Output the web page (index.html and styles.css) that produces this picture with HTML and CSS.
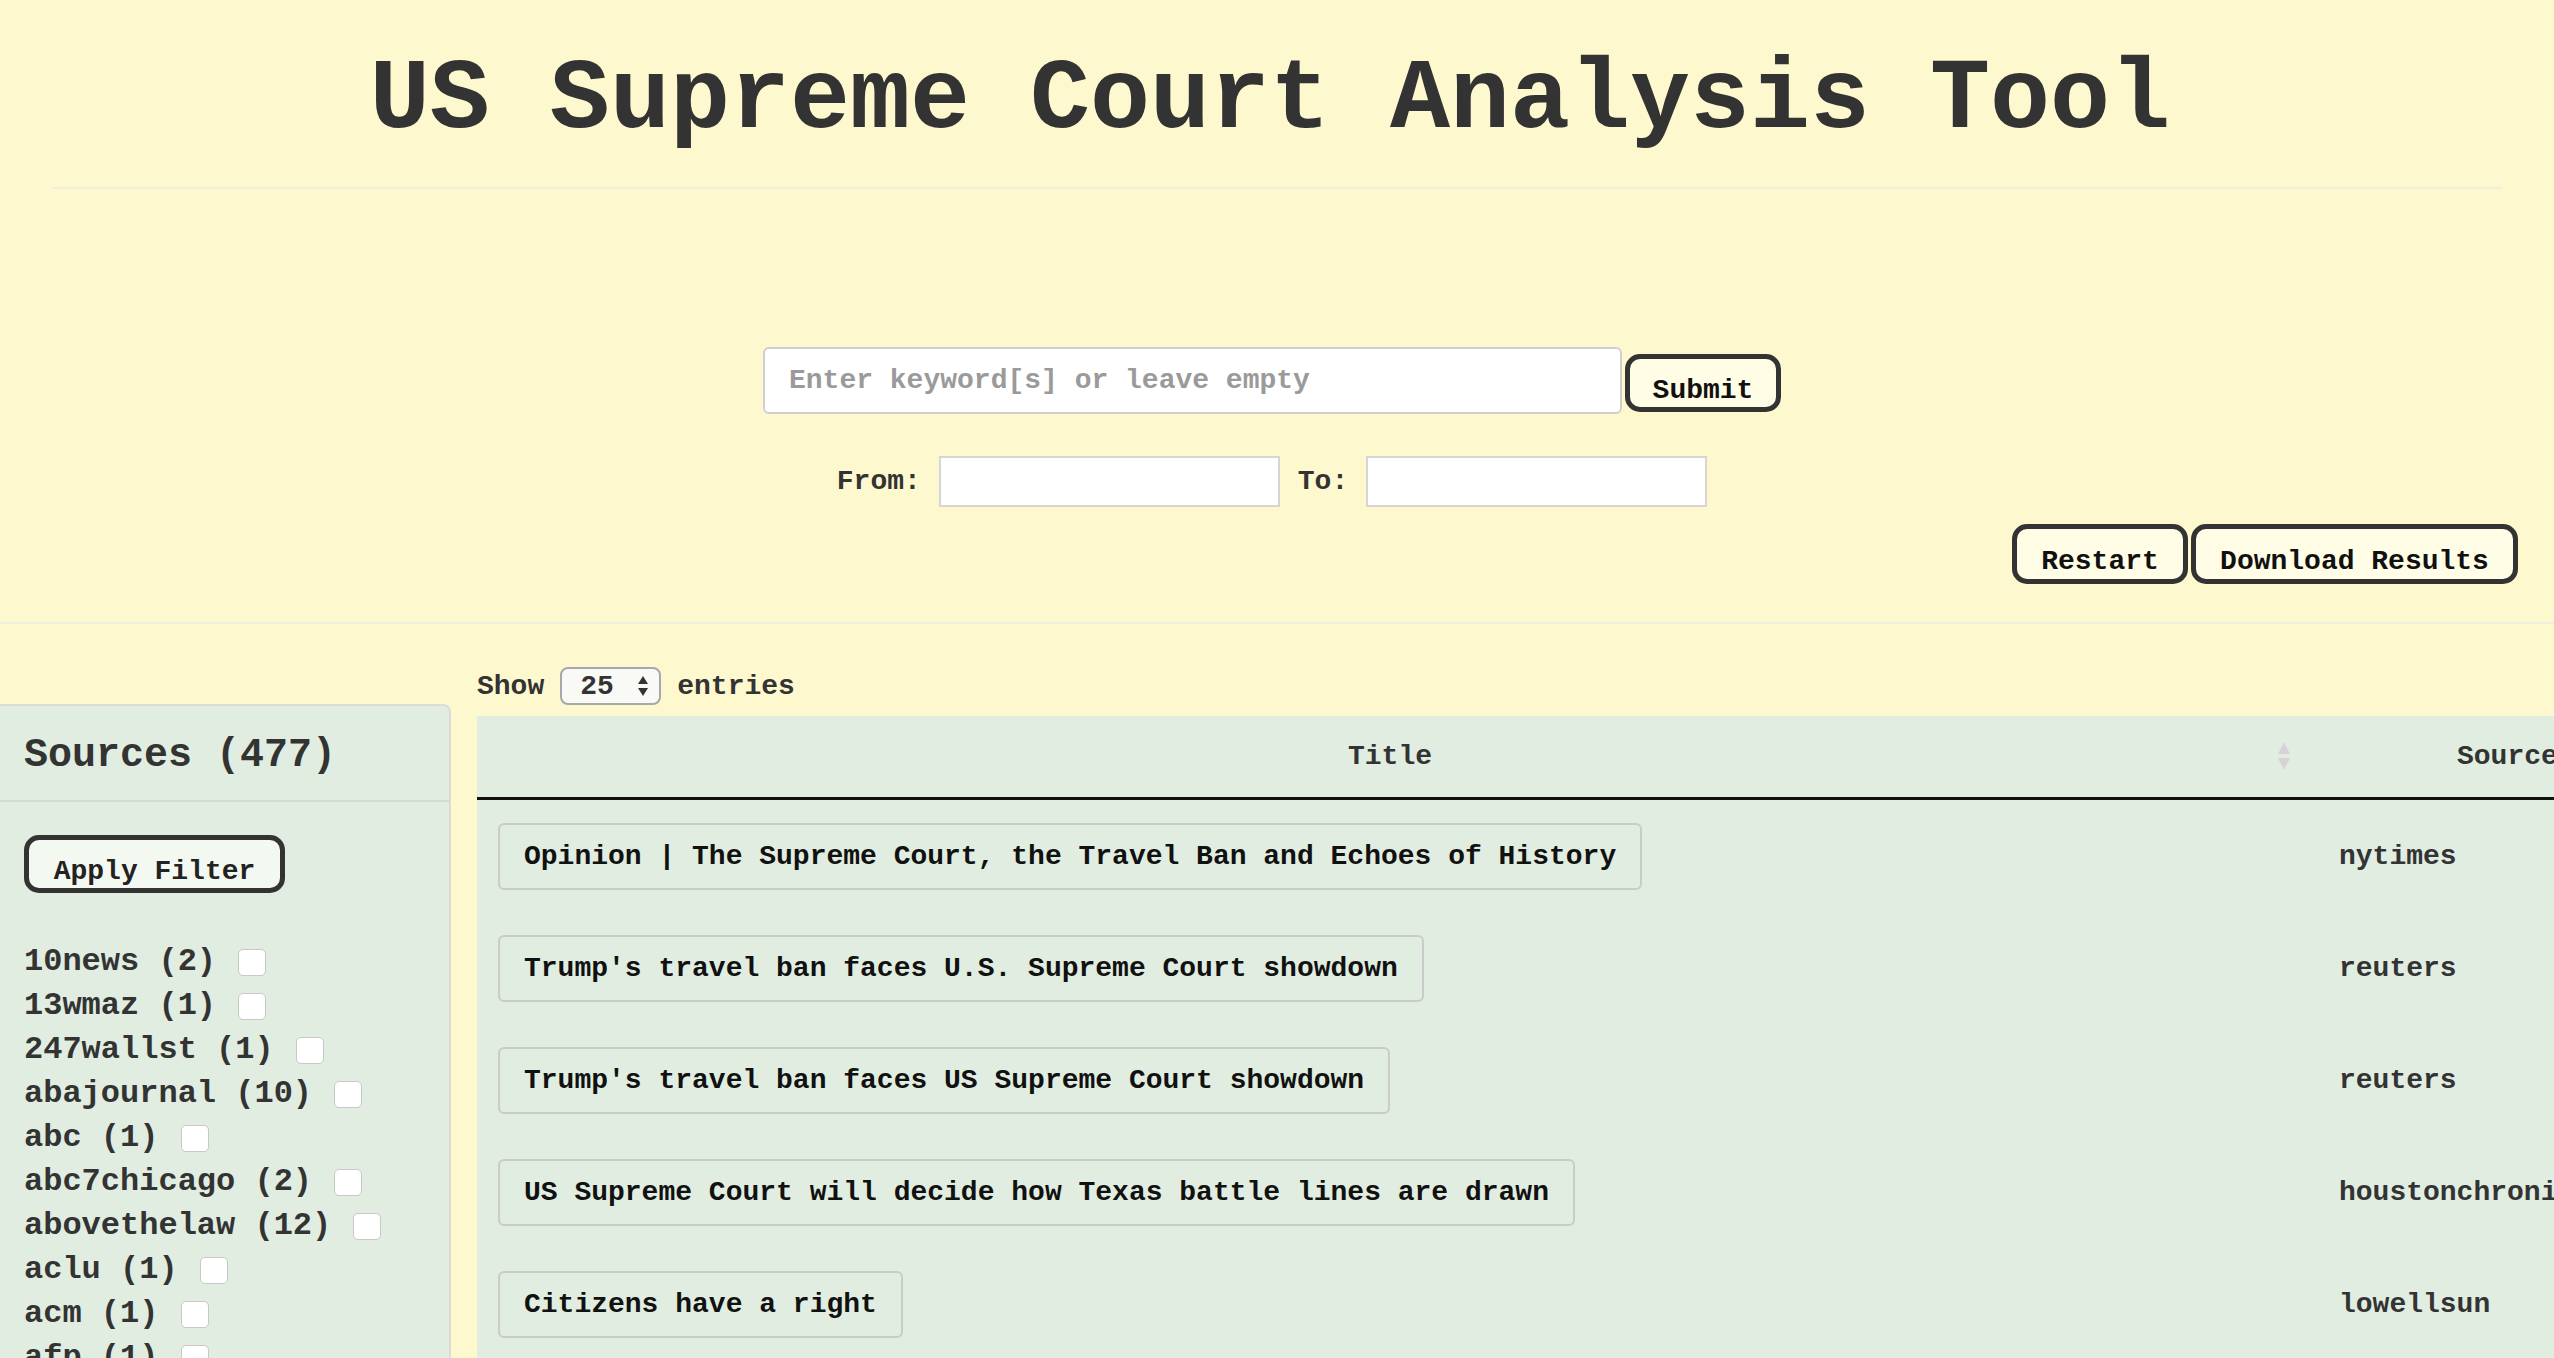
FILE: index.html
```html
<!DOCTYPE html>
<html>
<head>
<meta charset="utf-8">
<title>US Supreme Court Analysis Tool</title>
<link rel="stylesheet" href="styles.css">
</head>
<body>
<header class="top">
  <h1 class="page-title">US Supreme Court Analysis Tool</h1>
  <div class="rule"></div>
  <form class="search">
    <div class="search-row">
      <input class="keyword" type="text" placeholder="Enter keyword[s] or leave empty">
      <button class="btn btn-submit" type="button">Submit</button>
    </div>
    <div class="date-row">
      <label class="lbl">From:</label>
      <input class="date" type="text">
      <label class="lbl lbl-to">To:</label>
      <input class="date" type="text">
    </div>
  </form>
  <div class="actions">
    <button class="btn btn-action" type="button">Restart</button>
    <button class="btn btn-action" type="button">Download Results</button>
  </div>
</header>

<main class="main">
  <aside class="sidebar">
    <div class="side-head">Sources (477)</div>
    <div class="side-body">
      <button class="btn btn-filter" type="button">Apply Filter</button>
      <ul class="src-list">
        <li>10news (2) <input type="checkbox" class="cb"></li>
        <li>13wmaz (1) <input type="checkbox" class="cb"></li>
        <li>247wallst (1) <input type="checkbox" class="cb"></li>
        <li>abajournal (10) <input type="checkbox" class="cb"></li>
        <li>abc (1) <input type="checkbox" class="cb"></li>
        <li>abc7chicago (2) <input type="checkbox" class="cb"></li>
        <li>abovethelaw (12) <input type="checkbox" class="cb"></li>
        <li>aclu (1) <input type="checkbox" class="cb"></li>
        <li>acm (1) <input type="checkbox" class="cb"></li>
        <li>afp (1) <input type="checkbox" class="cb"></li>
        <li>ajc (1) <input type="checkbox" class="cb"></li>
      </ul>
    </div>
  </aside>

  <section class="results">
    <div class="length">
      <span>Show</span>
      <span class="select">25
        <svg class="arrows" width="12" height="22" viewBox="0 0 12 22"><path d="M6 1 L11 9 L1 9 Z M6 21 L11 13 L1 13 Z" fill="#333"/></svg>
      </span>
      <span>entries</span>
    </div>
    <table class="tbl">
      <thead>
        <tr>
          <th class="col-title">Title
            <svg class="sort" width="14" height="30" viewBox="0 0 14 30"><path d="M7 1 L13 13 L1 13 Z M7 29 L13 17 L1 17 Z" fill="#d8d2d8"/></svg>
          </th>
          <th class="col-source">Source</th>
        </tr>
      </thead>
      <tbody>
        <tr><td class="col-title"><span class="tag">Opinion | The Supreme Court, the Travel Ban and Echoes of History</span></td><td class="col-source">nytimes</td></tr>
        <tr><td class="col-title"><span class="tag">Trump's travel ban faces U.S. Supreme Court showdown</span></td><td class="col-source">reuters</td></tr>
        <tr><td class="col-title"><span class="tag">Trump's travel ban faces US Supreme Court showdown</span></td><td class="col-source">reuters</td></tr>
        <tr><td class="col-title"><span class="tag">US Supreme Court will decide how Texas battle lines are drawn</span></td><td class="col-source">houstonchronicle</td></tr>
        <tr><td class="col-title"><span class="tag">Citizens have a right</span></td><td class="col-source">lowellsun</td></tr>
      </tbody>
    </table>
  </section>
</main>
</body>
</html>
```

FILE: styles.css
```css
html, body {
  margin: 0;
  padding: 0;
  background: #fef8cf;
  font-family: "Liberation Mono", "Courier New", monospace;
  font-weight: bold;
  color: #333;
  overflow: hidden;
  height: 1358px;
}

.top {
  border-bottom: 2px solid #efeee0;
}

.page-title {
  margin: 0;
  padding-top: 46px;
  padding-right: 14px;
  font-size: 100px;
  line-height: 110px;
  text-align: center;
  color: #333;
  font-weight: bold;
}

.rule {
  margin: 31px 52px 0;
  border-top: 2px solid #efeee0;
}

.search {
  display: flex;
  flex-direction: column;
  align-items: center;
}

.search-row {
  display: flex;
  align-items: center;
  margin-top: 158px;
  margin-right: 10px;
  gap: 3px;
}

.keyword {
  width: 859px;
  height: 67px;
  box-sizing: border-box;
  border: 2px solid #cfcfcf;
  border-radius: 6px;
  background: #fff;
  padding: 0 24px;
  font-family: "Liberation Mono", monospace;
  font-weight: bold;
  font-size: 28px;
  color: #333;
  outline: none;
}

.keyword::placeholder {
  color: #9a9a9a;
}

.btn {
  font-family: "Liberation Mono", monospace;
  font-weight: bold;
  font-size: 28px;
  color: #111;
  border: 5px solid #333;
  border-radius: 15px;
  background: #fffde6;
  box-sizing: border-box;
  cursor: pointer;
}

.btn-submit {
  width: 156px;
  height: 58px;
  padding: 14px 0 0;
  margin-top: 5px;
}

.date-row {
  display: flex;
  align-items: center;
  margin-top: 42px;
  margin-right: 10px;
}

.lbl {
  font-size: 28px;
  color: #333;
  margin-right: 18px;
}

.lbl-to {
  margin-left: 18px;
}

.date {
  width: 341px;
  height: 51px;
  box-sizing: border-box;
  border: 2px solid #d6d6d6;
  background: #fff;
  outline: none;
}

.actions {
  display: flex;
  justify-content: flex-end;
  gap: 3px;
  margin-top: 17px;
  padding-right: 36px;
  padding-bottom: 38px;
}

.btn-action {
  height: 60px;
  padding: 14px 22px 0;
}

.btn-action:first-child {
  width: 176px;
}

.btn-action:last-child {
  width: 327px;
}

.main {
  display: flex;
  align-items: flex-start;
  gap: 26px;
  height: 740px;
  overflow: hidden;
}

.sidebar {
  width: 451px;
  flex: none;
  box-sizing: border-box;
  margin-top: 80px;
  background: #e0ede0;
  border-top: 2px solid #d9ddd6;
  border-right: 2px solid #d9ddd6;
  border-top-right-radius: 8px;
  height: 700px;
}

.side-head {
  height: 96px;
  box-sizing: border-box;
  padding: 28px 0 0 24px;
  font-size: 40px;
  line-height: 44px;
  color: #333;
  border-bottom: 2px solid #d3dcd3;
}

.side-body {
  padding: 33px 0 0 24px;
}

.btn-filter {
  width: 261px;
  height: 58px;
  padding: 14px 0 0;
  background: #f3f8f1;
  color: #222;
}

.src-list {
  list-style: none;
  margin: 47px 0 0;
  padding: 0;
  font-size: 32px;
  line-height: 44px;
  color: #333;
}

.src-list li {
  display: flex;
  align-items: center;
  white-space: pre;
}

.cb {
  appearance: none;
  -webkit-appearance: none;
  width: 28px;
  height: 27px;
  margin: 0 0 0 3px;
  background: #fff;
  border: 1.5px solid #c8c8c8;
  border-radius: 5px;
  box-sizing: border-box;
}

.results {
  flex: 1;
  min-width: 0;
  padding-top: 43px;
}

.length {
  display: flex;
  align-items: center;
  font-size: 28px;
  color: #333;
  gap: 16px;
  height: 38px;
}

.select {
  display: inline-flex;
  align-items: center;
  justify-content: space-between;
  width: 101px;
  height: 38px;
  box-sizing: border-box;
  padding: 0 10px 0 18px;
  border: 2px solid #a8a8a8;
  border-radius: 8px;
  background: #f9f9f6;
  font-size: 28px;
}

.tbl {
  margin-top: 11px;
  border-collapse: collapse;
  background: #e0ede0;
  width: 2240px;
  table-layout: fixed;
}

.tbl th {
  height: 81px;
  border-bottom: 3px solid #111;
  font-size: 28px;
  color: #333;
  position: relative;
  padding: 0;
}

.tbl th.col-title {
  width: 1826px;
}

.tbl th.col-source {
  text-align: left;
  padding-left: 154px;
}

.sort {
  position: absolute;
  right: 12px;
  top: 25px;
}

.tbl td {
  height: 112px;
  padding: 0;
  font-size: 28px;
  vertical-align: middle;
}

.tbl td.col-title {
  padding-left: 21px;
}

.tbl td.col-source {
  padding-left: 36px;
  color: #333;
  white-space: nowrap;
}

.tag {
  display: inline-block;
  height: 67px;
  line-height: 63px;
  box-sizing: border-box;
  padding: 0 24px 0 24px;
  border: 2px solid #cbcbcb;
  border-radius: 6px;
  color: #111;
  white-space: nowrap;
}
```
